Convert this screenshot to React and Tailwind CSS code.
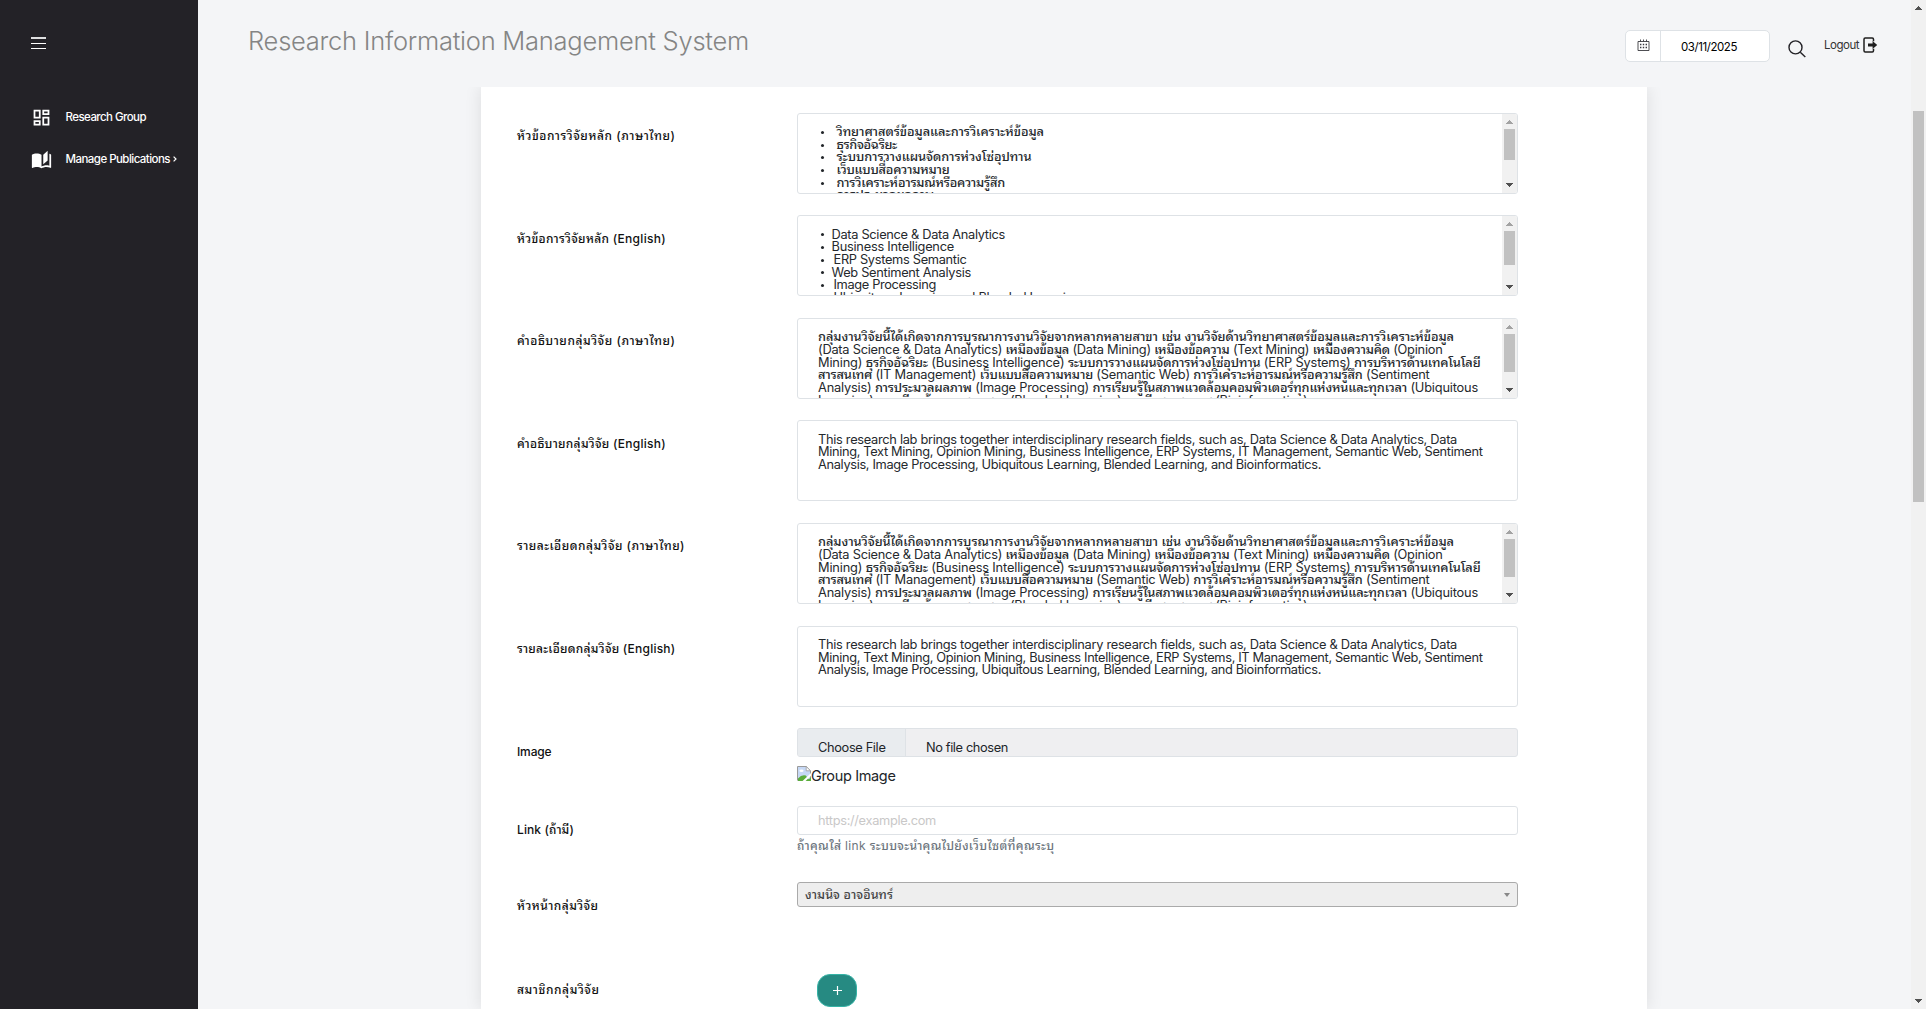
import { useLayoutEffect, useRef } from "react";
import { MdOutlineDashboard } from "react-icons/md";

// Sets tracking so that a line of text takes exactly the given width.
// Thai runs are drawn a little heavier than the Latin text around them.
function Line({ w, className = "", children }) {
  const ref = useRef(null);
  useLayoutEffect(() => {
    const el = ref.current;
    el.style.letterSpacing = "0px";
    const natural = el.getBoundingClientRect().width;
    el.style.letterSpacing = "1px";
    const step = el.getBoundingClientRect().width - natural;
    el.style.letterSpacing = `${(w - natural) / step}px`;
  }, [w]);
  const runs = children.split(/([\u0E00-\u0E7F]+)/);
  return (
    <span ref={ref} className={`inline-block whitespace-pre ${className}`}>
      {runs.map((run, i) =>
        i % 2 ? <span key={i} className="font-medium">{run}</span> : run
      )}
    </span>
  );
}

const thaiDetail = [
  [636, "กลุ่มงานวิจัยนี้ได้เกิดจากการบูรณาการงานวิจัยจากหลากหลายสาขา เช่น งานวิจัยด้านวิทยาศาสตร์ข้อมูลและการวิเคราะห์ข้อมูล"],
  [624.5, "(Data Science & Data Analytics) เหมืองข้อมูล (Data Mining) เหมืองข้อความ (Text Mining) เหมืองความคิด (Opinion"],
  [662.5, "Mining) ธุรกิจอัฉริยะ (Business Intelligence) ระบบการวางแผนจัดการห่วงโซ่อุปทาน (ERP Systems) การบริหารด้านเทคโนโลยี"],
  [611.5, "สารสนเทศ (IT Management) เว็บแบบสื่อความหมาย (Semantic Web) การวิเคราะห์อารมณ์หรือความรู้สึก (Sentiment"],
  [660, "Analysis) การประมวลผลภาพ (Image Processing) การเรียนรู้ในสภาพแวดล้อมคอมพิวเตอร์ทุกแห่งหนและทุกเวลา (Ubiquitous"],
  [489.5, "Learning)  การเรียนรู้แบบผสมผสาน (Blended Learning) และชีวสารสนเทศ (Bioinformatics)"],
];

const englishDetail = [
  [639, "This research lab brings together interdisciplinary research fields, such as, Data Science & Data Analytics, Data"],
  [664.5, "Mining, Text Mining, Opinion Mining, Business Intelligence, ERP Systems, IT Management, Semantic Web, Sentiment"],
  [503, "Analysis, Image Processing, Ubiquitous Learning, Blended Learning, and Bioinformatics."],
];

const thaiTopics = [
  [207.5, "วิทยาศาสตร์ข้อมูลและการวิเคราะห์ข้อมูล"],
  [60.5, "ธุรกิจอัฉริยะ"],
  [195, "ระบบการวางแผนจัดการห่วงโซ่อุปทาน"],
  [113, "เว็บแบบสื่อความหมาย"],
  [168.5, "การวิเคราะห์อารมณ์หรือความรู้สึก"],
  [97.5, "การประมวลผลภาพ"],
];

const englishTopics = [
  [173.5, "Data Science & Data Analytics"],
  [122.5, "Business Intelligence"],
  [133, "ERP Systems Semantic", true],
  [139.5, "Web Sentiment Analysis"],
  [102.5, "Image Processing", true],
  [247, "Ubiquitous Learning and Blended Learning", true],
];

function Arrow({ down, className }) {
  return (
    <svg viewBox="0 0 7 4" className={`h-1 w-[7px] ${down ? "rotate-180" : ""} ${className}`} fill="currentColor">
      <path d="M3 0h1v1h1v1h1v1h1v1H0V3h1V2h1V1h1z" />
    </svg>
  );
}

function Scrollbar({ thumb }) {
  return (
    <div className="flex w-[15px] shrink-0 flex-col items-center bg-[#f1f1f1] pt-[6px] pb-[6px]">
      <Arrow className="text-[#a3a3a3]" />
      <div className={`mt-[5px] w-[11px] bg-[#c1c1c1] ${thumb}`} />
      <Arrow down className="mt-auto text-[#505050]" />
    </div>
  );
}

function TextBox({ thumb, children }) {
  return (
    <div className="flex h-[81px] w-[721px] overflow-hidden rounded-[3px] border border-[#dee2e6] bg-white">
      <div className="flex-1 pt-[12.4px] pl-[20px] text-[12.8px] leading-[12.7px] text-[#25292d]">{children}</div>
      {thumb && <Scrollbar thumb={thumb} />}
    </div>
  );
}

function Lines({ rows }) {
  return rows.map(([w, text]) => (
    <div key={text} className="h-[12.7px]">
      <Line w={w}>{text}</Line>
    </div>
  ));
}

function Bullets({ rows, indent }) {
  return rows.map(([w, text, shifted], i) => (
    <div key={text} className="flex h-[12.7px] items-center">
      <span className={`shrink-0 ${indent} ${shifted ? "mr-[2px]" : ""}`}>
        <span className={`ml-[3px] block size-[3px] rounded-full bg-[#212529] ${i === 5 ? "invisible" : ""}`} />
      </span>
      <Line w={w}>{text}</Line>
    </div>
  ));
}

function Row({ label, w, height = "h-[102.6px]", children }) {
  return (
    <div className={`flex ${height}`}>
      <div className="w-[280px] shrink-0 pt-[14.4px] text-[12px] leading-[18px] font-medium text-[#111]">
        <Line w={w}>{label}</Line>
      </div>
      <div>{children}</div>
    </div>
  );
}

function Sidebar() {
  return (
    <aside className="flex w-[198px] shrink-0 flex-col bg-[#232227] text-white">
      <div className="flex h-[96px] flex-col gap-1 pt-[37px] pl-[31px]">
        <i className="h-[2px] w-[15px] bg-[#dedfe0]" />
        <i className="h-[1px] w-[15px] bg-white" />
        <i className="h-[1px] w-[15px] bg-white" />
      </div>
      <nav className="text-[11.5px] font-medium">
        <a className="flex h-[42px] items-center pl-[31px]">
          <MdOutlineDashboard className="mr-[13.5px] size-[21px]" />
          <Line w={80.5} className="mt-[2px]">Research Group</Line>
        </a>
        <a className="flex h-[42px] items-center pl-[31px]">
          <svg viewBox="0 0 24 24" className="mr-[13.5px] size-[21px]" fill="currentColor">
            <path d="M19 2L14 6.5V17.5L19 13V2M6.5 5C4.55 5 2.45 5.4 1 6.5V21.16C1 21.41 1.25 21.66 1.5 21.66C1.6 21.66 1.65 21.59 1.75 21.59C3.1 20.94 5.05 20.5 6.5 20.5C8.45 20.5 10.55 20.9 12 22C13.35 21.15 15.8 20.5 17.5 20.5C19.15 20.5 20.85 20.81 22.25 21.56C22.35 21.61 22.4 21.59 22.5 21.59C22.75 21.59 23 21.34 23 21.09V6.5C22.4 6.05 21.75 5.75 21 5.5V19C19.9 18.65 18.7 18.5 17.5 18.5C15.8 18.5 13.35 19.15 12 20V6.5C10.55 5.4 8.45 5 6.5 5Z" />
          </svg>
          <Line w={104.5} className="mt-[2px]">Manage Publications</Line>
          <svg viewBox="0 0 4 6" className="ml-[3px] h-[6px] w-1" fill="none" stroke="currentColor" strokeWidth="1.2">
            <path d="M.6.6 3 3 .6 5.4" />
          </svg>
        </a>
      </nav>
    </aside>
  );
}

function Header() {
  return (
    <header className="relative z-10 flex h-[87px] shrink-0 items-start bg-[#f4f5f7] pl-[50px]">
      <h1 className="mt-[24px] text-[25.5px] leading-[34px] font-light text-[#858585]">
        <Line w={501}>Research Information Management System</Line>
      </h1>
      <div className="mt-[30px] ml-auto flex h-8 w-[145px] overflow-hidden rounded-[5px] border border-[#dee2e6] bg-white">
        <div className="flex w-[35px] justify-center border-r border-[#dee2e6] pt-[8px]">
          <svg viewBox="0 0 13 13" className="size-[13px]" fill="none" stroke="#3a3a40">
            <path d="M1 2.5h11v9H1zM3.5.5v2M6.5.5v2M9.5.5v2" strokeWidth=".9" />
            <path d="M3 5.5h7M3 8.5h7" strokeWidth="1.4" strokeDasharray="1.4 1.4" />
          </svg>
        </div>
        <div className="pt-[8px] pl-[20px] text-[11.5px] leading-4 text-black">
          <Line w={56}>03/11/2025</Line>
        </div>
      </div>
      <svg viewBox="0 0 18 18" className="mt-[40px] ml-[18px] size-[18px]" fill="none" stroke="#232227" strokeWidth="1.4">
        <circle cx="7.5" cy="7.4" r="6.5" />
        <path d="m12.3 12.2 5 4.9" />
      </svg>
      <div className="mt-[37px] ml-[18px] flex w-[87px] text-[11.5px] leading-4 text-[#333]">
        <Line w={35}>Logout</Line>
        <svg viewBox="0 0 15 16" className="ml-1 h-4 w-[15px]" fill="none" stroke="#1f1f1f" strokeWidth="1.5">
          <path d="M10.5 4.2V2.2Q10.5 1 9.3 1H2.2Q1 1 1 2.2v11.6Q1 15 2.2 15h7.1q1.2 0 1.2-1.2v-2" />
          <path d="M5 6.6h4.6V4l4.6 4-4.6 4V9.4H5z" fill="#1f1f1f" stroke="none" />
        </svg>
      </div>
    </header>
  );
}

function BrokenImage() {
  return (
    <svg viewBox="0 0 14 15" className="h-[15px] w-[14px]">
      <path d="M.5 14.5V.5h8.7l4.3 4.3v9.7" fill="#c6d8f5" stroke="#9a9a9a" />
      <path d="M9.2.5v4.3h4.3z" fill="#fff" stroke="#9a9a9a" strokeWidth=".8" />
      <ellipse cx="4.5" cy="4.8" rx="2.1" ry="1.2" fill="#fff" />
      <path d="M1 15v-2.4q3.5-4.4 7.8-3.2L13 15z" fill="#5aad3b" />
      <path d="m5.6 15 8.4-8v2.8L8.6 15z" fill="#fff" />
      <path d="M10 15h4v-3.8z" fill="#5aad3b" />
    </svg>
  );
}

export default function App() {
  return (
    <div className="flex h-[1009px] w-[1926px] overflow-hidden bg-[#f4f5f7] font-[Inter,'Noto_Sans_Thai_Looped',Loma,Waree,Garuda,'Noto_Sans_Thai','Noto_Sans',sans-serif]">
      <Sidebar />
      <div className="flex w-[1713px] shrink-0 flex-col">
        <Header />
        <main className="ml-[283px] h-[922px] w-[1166px] bg-white pt-[25.6px] pl-[36px] shadow-[0_0_16px_rgba(0,0,0,0.1)]">
          <Row label="หัวข้อการวิจัยหลัก (ภาษาไทย)" w={158.5}>
            <TextBox thumb="h-[31px]"><Bullets rows={thaiTopics} indent="w-[18.5px]" /></TextBox>
          </Row>
          <Row label="หัวข้อการวิจัยหลัก (English)" w={149}>
            <TextBox thumb="h-[34px]"><Bullets rows={englishTopics} indent="w-[13.5px]" /></TextBox>
          </Row>
          <Row label="คำอธิบายกลุ่มวิจัย (ภาษาไทย)" w={158.5}>
            <TextBox thumb="h-[38px]"><Lines rows={thaiDetail} /></TextBox>
          </Row>
          <Row label="คำอธิบายกลุ่มวิจัย (English)" w={149}>
            <TextBox><Lines rows={englishDetail} /></TextBox>
          </Row>
          <Row label="รายละเอียดกลุ่มวิจัย (ภาษาไทย)" w={168}>
            <TextBox thumb="h-[38px]"><Lines rows={thaiDetail} /></TextBox>
          </Row>
          <Row label="รายละเอียดกลุ่มวิจัย (English)" w={158.5}>
            <TextBox><Lines rows={englishDetail} /></TextBox>
          </Row>
          <Row label="Image" w={34.5} height="h-[78px]">
            <div className="flex h-[29px] w-[721px] overflow-hidden rounded-[3px] border border-[#dee2e6] bg-[#efeff1] text-[12.8px] leading-4 text-[#212529]">
              <div className="w-[108px] border-r border-[#dee2e6] bg-[#e9ecef] pt-[11px] pl-[20px]">
                <Line w={67.5}>Choose File</Line>
              </div>
              <div className="pt-[11px] pl-[20px]">
                <Line w={82}>No file chosen</Line>
              </div>
            </div>
            <div className="mt-[9px] flex text-[14.5px] leading-5 text-[#212529]">
              <BrokenImage />
              <Line w={84.5}>Group Image</Line>
            </div>
          </Row>
          <Row label="Link (ถ้ามี)" w={57} height="h-[76px]">
            <div className="h-[29px] w-[721px] rounded-[3px] border border-[#dee2e6] pt-[5.5px] pl-[20px] text-[12.8px] leading-4 text-[#c9c8c8]">
              <Line w={118}>https://example.com</Line>
            </div>
            <div className="mt-[2px] text-[12px] leading-[18px] text-[#6c757d]">
              <Line w={257.5}>ถ้าคุณใส่ link ระบบจะนำคุณไปยังเว็บไซต์ที่คุณระบุ</Line>
            </div>
          </Row>
          <Row label="หัวหน้ากลุ่มวิจัย" w={81.5} height="h-[84px]">
            <div className="flex h-[25px] w-[721px] items-center justify-between rounded-[3px] border border-[#aaa] bg-[#eee] pr-[7px] pl-[7px] text-[12.5px] text-[#444]">
              <Line w={88} className="mt-[2px]">งามนิจ อาจอินทร์</Line>
              <svg viewBox="0 0 6 4" className="h-1 w-[6px]" fill="#888">
                <path d="M0 0h6L3 4z" />
              </svg>
            </div>
          </Row>
          <Row label="สมาชิกกลุ่มวิจัย" w={82.5} height="h-10">
            <button className="mt-[8px] ml-[20px] flex h-[33px] w-10 items-center justify-center rounded-[13px] border border-[#36b3a6] bg-[#268a82]">
              <svg viewBox="0 0 9 9" className="size-[9px]" stroke="#fff" strokeWidth="1.2">
                <path d="M4.5 0v9M0 4.5h9" />
              </svg>
            </button>
          </Row>
        </main>
      </div>
      <div className="flex w-[15px] flex-col items-center bg-[#f1f1f1] py-[6px]">
        <Arrow className="text-[#505050]" />
        <div className="mt-[101px] h-[391px] w-[11px] bg-[#c1c1c1]" />
        <Arrow down className="mt-auto text-[#505050]" />
      </div>
    </div>
  );
}
